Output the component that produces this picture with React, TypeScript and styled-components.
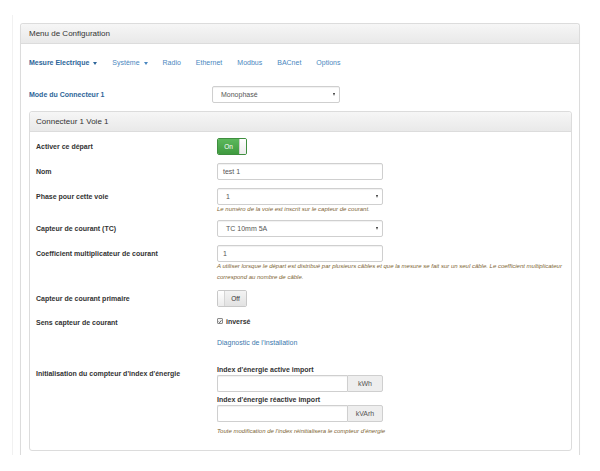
import React from "react";
import styled, { createGlobalStyle } from "styled-components";

const Global = createGlobalStyle`
  html, body { margin: 0; padding: 0; background: #fff; }
  body { font-family: "Liberation Sans", Arial, Helvetica, sans-serif; color: #333; }
  * { box-sizing: border-box; }
`;

const Shell = styled.div`
  margin: 15px 0 0 12px;
  padding: 8px 0 0 7px;
  border-left: 1px solid #f1f1f1;
`;

const OuterPanel = styled.section`
  width: 560px;
  border: 1px solid #dcdcdc;
  border-bottom: none;
  border-radius: 3px 3px 0 0;
  box-shadow: 0 1px 1px rgba(0, 0, 0, 0.04);
`;

const Heading = styled.div<{ $pad: number }>`
  height: 20px;
  line-height: 19px;
  padding: 0 ${(p) => p.$pad}px;
  font-size: 8px;
  color: #333;
  background: linear-gradient(#f6f6f6, #e9e9e9);
  border-bottom: 1px solid #dcdcdc;
  border-radius: 3px 3px 0 0;
`;

const OuterBody = styled.div`
  padding: 9px 7px 4px 8px;
`;

const Nav = styled.nav`
  display: flex;
  gap: 15px;
  font-size: 7px;
  line-height: 20px;
`;

const NavItem = styled.a<{ $active?: boolean }>`
  display: flex;
  align-items: center;
  color: ${(p) => (p.$active ? "#2d6599" : "#4a87c0")};
  font-weight: ${(p) => (p.$active ? 700 : 400)};
  text-decoration: none;
  white-space: nowrap;
`;

const Caret = styled.span`
  display: inline-block;
  margin-left: 4px;
  width: 0;
  height: 0;
  border-top: 3px solid currentColor;
  border-left: 2.5px solid transparent;
  border-right: 2.5px solid transparent;
`;

const ModeRow = styled.div`
  display: grid;
  grid-template-columns: 183px 128px;
  align-items: center;
  margin-top: 13px;
`;

const ModeLabel = styled.span`
  font-size: 7px;
  font-weight: 700;
  color: #2d6599;
`;

const SelectBox = styled.div<{ $w: number }>`
  position: relative;
  width: ${(p) => p.$w}px;
  height: 17px;
  line-height: 15px;
  padding: 0 12px 0 8px;
  border: 1px solid #cfcfcf;
  border-radius: 2px;
  background: #fff;
  font-size: 7px;
  color: #555;
  box-shadow: inset 0 1px 1px rgba(0, 0, 0, 0.06);
  &::after {
    content: "";
    position: absolute;
    right: 4px;
    top: 6px;
    border-top: 3px solid #333;
    border-left: 1.5px solid transparent;
    border-right: 1.5px solid transparent;
  }
`;

const InnerPanel = styled.section`
  margin-top: 8px;
  border: 1px solid #dcdcdc;
  border-radius: 3px;
`;

const InnerBody = styled.div`
  padding: 6px 6px 13px 6px;
`;

const FormGroup = styled.div<{ $mb: number }>`
  display: grid;
  grid-template-columns: 181px 1fr;
  margin-bottom: ${(p) => p.$mb}px;
`;

const Label = styled.div<{ $lh?: number; $pt?: number }>`
  font-size: 7px;
  font-weight: 700;
  color: #333;
  line-height: ${(p) => p.$lh ?? 17}px;
  padding-top: ${(p) => p.$pt ?? 0}px;
`;

const Field = styled.div`
  display: flex;
  flex-direction: column;
  align-items: flex-start;
`;

const Toggle = styled.div<{ $on: boolean }>`
  display: flex;
  width: 30px;
  height: 17px;
  border: 1px solid ${(p) => (p.$on ? "#3f8e3f" : "#c8c8c8")};
  border-radius: 2px;
  overflow: hidden;
`;

const ToggleState = styled.span<{ $on: boolean }>`
  flex: 1;
  display: flex;
  align-items: center;
  justify-content: center;
  font-size: 6.5px;
  color: ${(p) => (p.$on ? "#fff" : "#333")};
  background: ${(p) =>
    p.$on ? "linear-gradient(#5cb85c, #3f9a3f)" : "linear-gradient(#f3f3f3, #e2e2e2)"};
`;

const ToggleHandle = styled.span<{ $on: boolean }>`
  width: 7px;
  background: linear-gradient(#ffffff, #ececec);
  border-left: ${(p) => (p.$on ? "1px solid #cfcfcf" : "none")};
  border-right: ${(p) => (p.$on ? "none" : "1px solid #d5d5d5")};
`;

const TextInput = styled.div<{ $w: number }>`
  width: ${(p) => p.$w}px;
  height: 17px;
  line-height: 15px;
  padding: 0 5px;
  border: 1px solid #cfcfcf;
  border-radius: 2px;
  font-size: 7px;
  color: #555;
  box-shadow: inset 0 1px 1px rgba(0, 0, 0, 0.06);
`;

const Help = styled.p<{ $mb?: number }>`
  margin: -1px 0 ${(p) => p.$mb ?? 0}px 0;
  font-size: 6px;
  font-style: italic;
  line-height: 11px;
  color: #7d6434;
`;

const CheckLine = styled.label`
  display: flex;
  align-items: center;
  gap: 3px;
  height: 12px;
  font-size: 7px;
  font-weight: 700;
  color: #333;
`;

const CheckBox = styled.span`
  display: inline-flex;
  align-items: center;
  justify-content: center;
  width: 6px;
  height: 6px;
  border: 1px solid #8a8a8a;
  border-radius: 1px;
  background: #f4f4f4;
`;

const Link = styled.a`
  font-size: 7px;
  line-height: 12px;
  color: #3c78ad;
  text-decoration: none;
`;

const IndexLabel = styled.div<{ $mt?: number }>`
  margin-top: ${(p) => p.$mt ?? 0}px;
  font-size: 7px;
  font-weight: 700;
  line-height: 10px;
  color: #333;
`;

const InputGroup = styled.div`
  display: flex;
  width: 166px;
  height: 17px;
`;

const GroupInput = styled.div`
  flex: 1;
  border: 1px solid #cfcfcf;
  border-right: none;
  border-radius: 2px 0 0 2px;
  box-shadow: inset 0 1px 1px rgba(0, 0, 0, 0.06);
`;

const Addon = styled.span`
  width: 36px;
  display: flex;
  align-items: center;
  justify-content: center;
  border: 1px solid #cfcfcf;
  border-radius: 0 2px 2px 0;
  background: #eee;
  font-size: 7px;
  color: #555;
`;

const Check = () => (
  <svg width="5" height="5" viewBox="0 0 10 10">
    <path d="M1.5 5.2 L4 7.8 L8.6 2" fill="none" stroke="#333" strokeWidth="1.8" />
  </svg>
);

const Switch = ({ on }: { on: boolean }) => (
  <Toggle $on={on}>
    {on ? (
      <>
        <ToggleState $on>On</ToggleState>
        <ToggleHandle $on />
      </>
    ) : (
      <>
        <ToggleHandle $on={false} />
        <ToggleState $on={false}>Off</ToggleState>
      </>
    )}
  </Toggle>
);

export default function App() {
  return (
    <>
      <Global />
      <Shell>
        <OuterPanel>
          <Heading $pad={8}>Menu de Configuration</Heading>
          <OuterBody>
            <Nav>
              <NavItem $active>
                Mesure Electrique <Caret />
              </NavItem>
              <NavItem>
                Système <Caret />
              </NavItem>
              <NavItem>Radio</NavItem>
              <NavItem>Ethernet</NavItem>
              <NavItem>Modbus</NavItem>
              <NavItem>BACnet</NavItem>
              <NavItem>Options</NavItem>
            </Nav>
            <ModeRow>
              <ModeLabel>Mode du Connecteur 1</ModeLabel>
              <SelectBox $w={128}>Monophasé</SelectBox>
            </ModeRow>
            <InnerPanel>
              <Heading $pad={6}>Connecteur 1 Voie 1</Heading>
              <InnerBody>
                <FormGroup $mb={8}>
                  <Label>Activer ce départ</Label>
                  <Field>
                    <Switch on />
                  </Field>
                </FormGroup>
                <FormGroup $mb={8}>
                  <Label>Nom</Label>
                  <Field>
                    <TextInput $w={166}>test 1</TextInput>
                  </Field>
                </FormGroup>
                <FormGroup $mb={5}>
                  <Label>Phase pour cette voie</Label>
                  <Field>
                    <SelectBox $w={166}>1</SelectBox>
                    <Help>Le numéro de la voie est inscrit sur le capteur de courant.</Help>
                  </Field>
                </FormGroup>
                <FormGroup $mb={8}>
                  <Label>Capteur de courant (TC)</Label>
                  <Field>
                    <SelectBox $w={166}>TC 10mm 5A</SelectBox>
                  </Field>
                </FormGroup>
                <FormGroup $mb={7}>
                  <Label>Coefficient multiplicateur de courant</Label>
                  <Field>
                    <TextInput $w={166}>1</TextInput>
                    <Help>
                      A utiliser lorsque le départ est distribué par plusieurs câbles et que la mesure se fait sur un seul câble. Le coefficient multiplicateur correspond au nombre de câble.
                    </Help>
                  </Field>
                </FormGroup>
                <FormGroup $mb={8}>
                  <Label>Capteur de courant primaire</Label>
                  <Field>
                    <Switch on={false} />
                  </Field>
                </FormGroup>
                <FormGroup $mb={8}>
                  <Label $lh={12} $pt={2}>Sens capteur de courant</Label>
                  <Field>
                    <CheckLine>
                      <CheckBox>
                        <Check />
                      </CheckBox>
                      inversé
                    </CheckLine>
                  </Field>
                </FormGroup>
                <FormGroup $mb={16}>
                  <div />
                  <Field>
                    <Link>Diagnostic de l'installation</Link>
                  </Field>
                </FormGroup>
                <FormGroup $mb={0}>
                  <Label>Initialisation du compteur d'index d'énergie</Label>
                  <Field>
                    <IndexLabel>Index d'énergie active import</IndexLabel>
                    <InputGroup>
                      <GroupInput />
                      <Addon>kWh</Addon>
                    </InputGroup>
                    <IndexLabel $mt={3}>Index d'énergie réactive import</IndexLabel>
                    <InputGroup>
                      <GroupInput />
                      <Addon>kVArh</Addon>
                    </InputGroup>
                    <Help style={{ marginTop: 4 }}>Toute modification de l'index réinitialisera le compteur d'énergie</Help>
                  </Field>
                </FormGroup>
              </InnerBody>
            </InnerPanel>
          </OuterBody>
        </OuterPanel>
      </Shell>
    </>
  );
}
